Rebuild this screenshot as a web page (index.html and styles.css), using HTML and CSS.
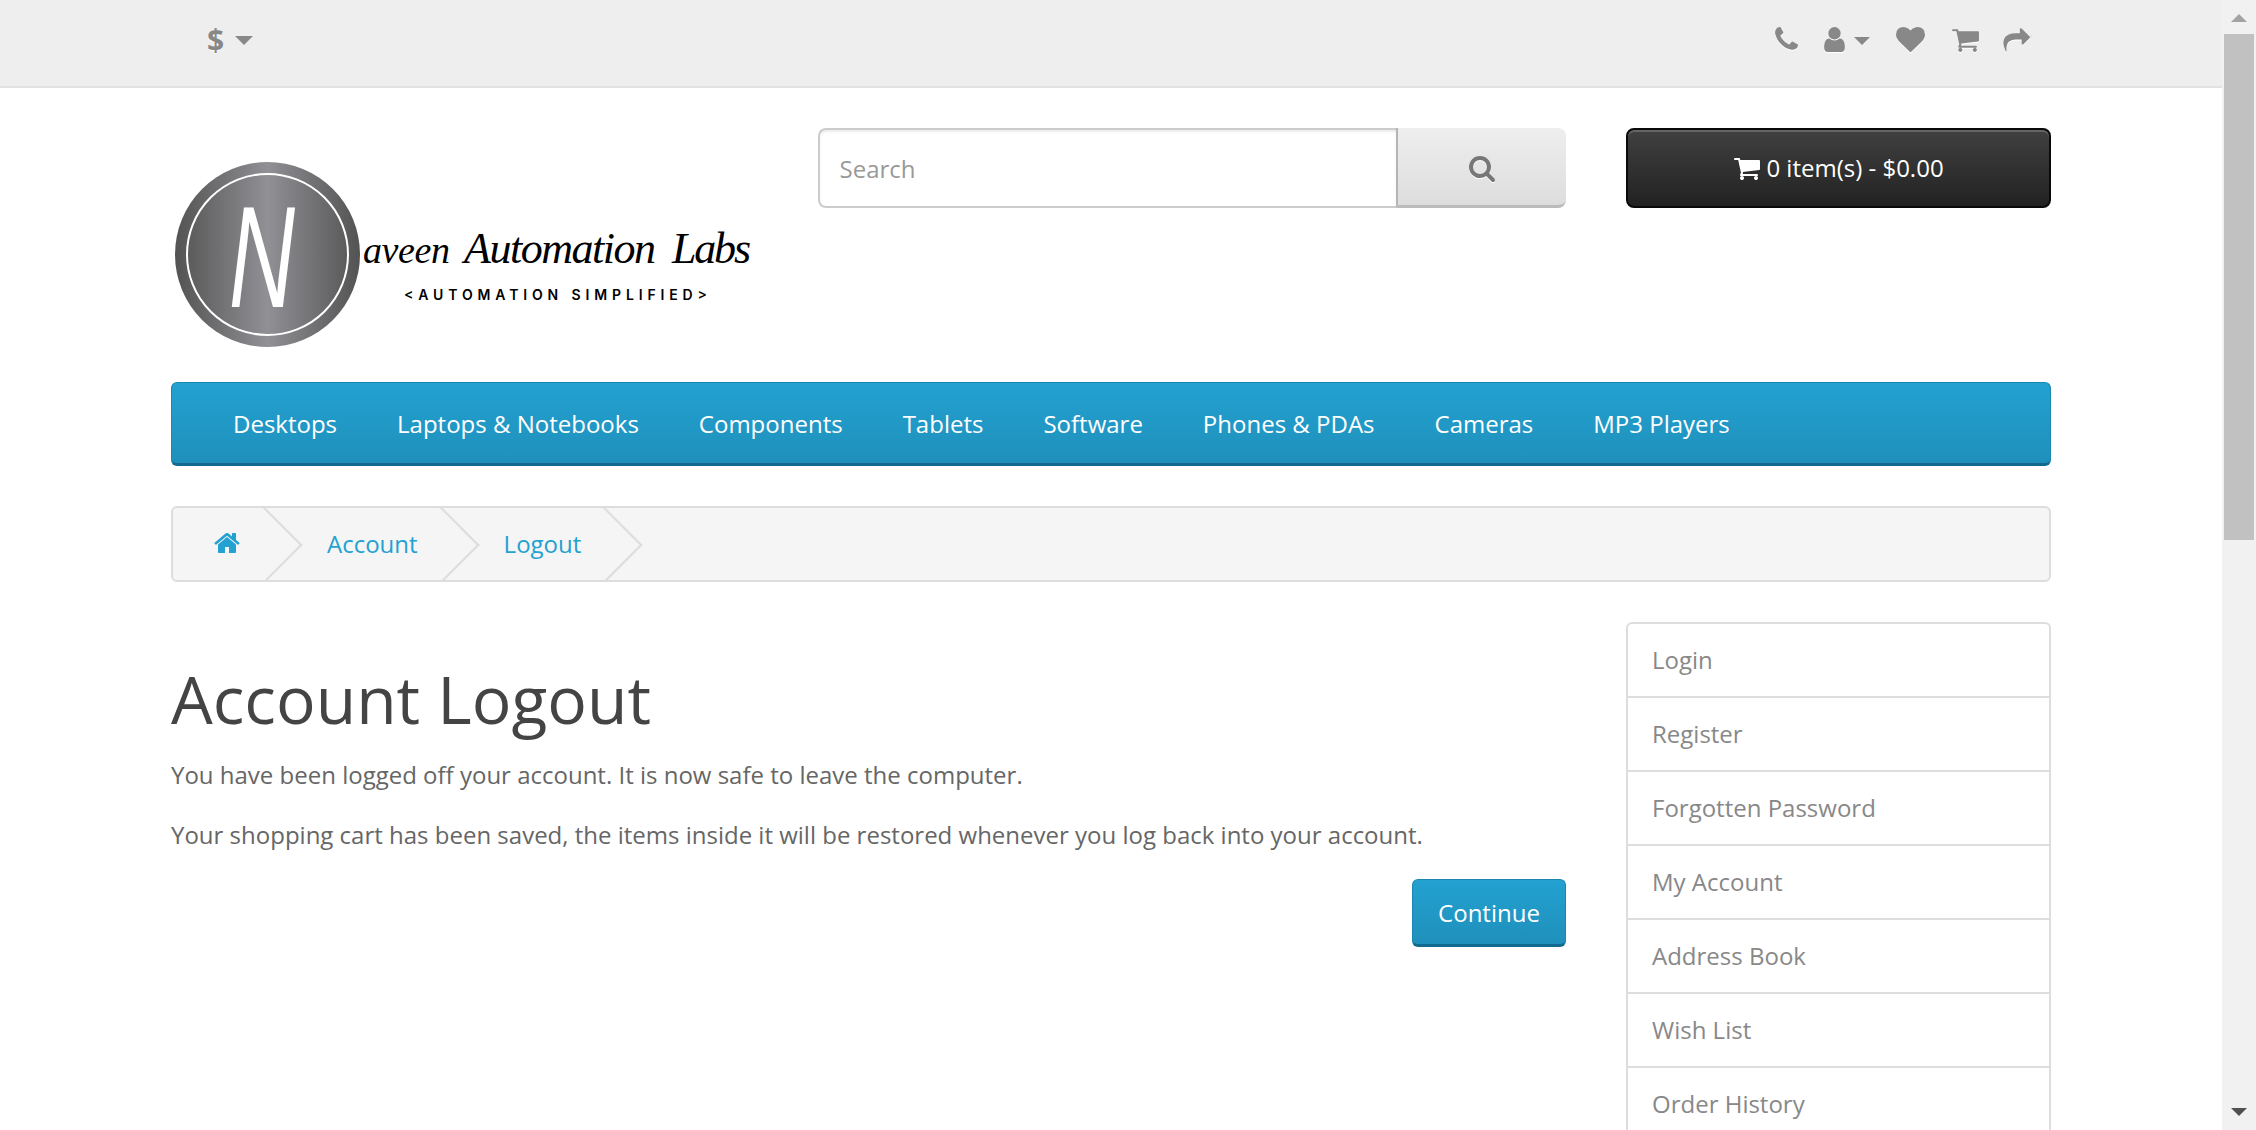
FILE: index.html
```html
<!DOCTYPE html>
<html lang="en">
<head>
<meta charset="utf-8">
<title>Account Logout</title>
<link rel="stylesheet" href="styles.css">
</head>
<body>
<svg class="defs" aria-hidden="true">
  <symbol id="i-home" viewBox="0 0 1792 1792"><path d="M1472 992v480q0 26-19 45t-45 19h-384v-384h-256v384h-384q-26 0-45-19t-19-45v-480q0-1 .5-3t.5-3l575-474 575 474q1 2 1 6zm223-69l-62 74q-8 9-21 11h-3q-13 0-21-7l-692-577-692 577q-12 8-24 7-13-2-21-11l-62-74q-8-10-7-23.5t11-21.5l719-599q32-26 76-26t76 26l244 204v-195q0-14 9-23t23-9h192q14 0 23 9t9 23v408l219 182q10 8 11 21.5t-7 23.5z"/></symbol>
  <symbol id="i-search" viewBox="0 0 1792 1792"><path d="M1216 832q0-185-131.500-316.500t-316.500-131.500-316.500 131.500-131.500 316.500 131.500 316.500 316.500 131.500 316.500-131.500 131.500-316.500zm512 832q0 52-38 90t-90 38q-54 0-90-38l-343-342q-179 124-399 124-143 0-273.500-55.500t-225-150-150-225-55.500-273.500 55.500-273.500 150-225 225-150 273.500-55.500 273.500 55.500 225 150 150 225 55.500 273.500q0 220-124 399l343 343q37 37 37 90z"/></symbol>
  <symbol id="i-cart" viewBox="0 0 1792 1792"><path d="M704 1536q0 52-38 90t-90 38-90-38-38-90 38-90 90-38 90 38 38 90zm896 0q0 52-38 90t-90 38-90-38-38-90 38-90 90-38 90 38 38 90zm128-1088v512q0 24-16.500 42.500t-40.500 21.500l-1044 122q13 60 13 70 0 16-24 64h920q26 0 45 19t19 45-19 45-45 19h-1024q-26 0-45-19t-19-45q0-11 8-31.500t16-36 21.500-40 15.500-29.500l-177-823h-204q-26 0-45-19t-19-45 19-45 45-19h256q16 0 28.500 6.500t19.500 15.500 13 24.500 8 26 5.500 29.500 4.500 26h1201q26 0 45 19t19 45z"/></symbol>
  <symbol id="i-heart" viewBox="0 0 1792 1792"><path d="M896 1664q-26 0-44-18l-624-602q-10-8-27.500-26t-55.500-65.500-68-97.500-53.500-121-23.500-138q0-220 127-344t351-124q62 0 126.500 21.500t120 58 95.500 68.500 76 68q36-36 76-68t95.500-68.500 120-58 126.500-21.500q224 0 351 124t127 344q0 221-229 450l-623 600q-18 18-44 18z"/></symbol>
  <symbol id="i-user" viewBox="0 0 1792 1792"><path d="M1536 1399q0 109-62.500 187t-150.500 78h-854q-88 0-150.500-78t-62.500-187q0-85 8.500-160.500t31.500-152 58.500-131 94-89 134.500-34.500q131 128 313 128t313-128q76 0 134.500 34.500t94 89 58.500 131 31.500 152 8.500 160.500zm-256-887q0 159-112.500 271.500t-271.500 112.500-271.500-112.500-112.500-271.500 112.500-271.500 271.500-112.500 271.500 112.500 112.500 271.500z"/></symbol>
  <symbol id="i-phone" viewBox="0 0 1792 1792"><path d="M1600 1240q0 27-10 70.500t-21 68.500q-21 50-122 106-94 51-186 51-27 0-53-3.500t-57.500-12.500-47-14.500-55.500-20.500-49-18q-98-35-175-83-127-79-264-216t-216-264q-48-77-83-175-3-9-18-49t-20.500-55.500-14.500-47-12.500-57.500-3.500-53q0-92 51-186 56-101 106-122 25-11 68.500-21t70.500-10q14 0 21 3 18 6 53 76 11 19 30 54t35 63.500 31 53.500q3 4 17.500 25t21.500 35.500 7 28.500q0 20-28.500 50t-62 55-62 53-28.500 46q0 9 5 22.500t8.500 20.500 14 24 11.500 19q76 137 174 235t235 174q2 1 19 11.500t24 14 20.500 8.500 22.500 5q18 0 46-28.500t53-62 55-62 50-28.500q14 0 28.500 7t35.500 21.500 25 17.500q25 15 53.500 31t63.500 35 54 30q70 35 76 53 3 7 3 21z"/></symbol>
  <symbol id="i-share" viewBox="0 0 1792 1792"><path d="M1792 640q0 26-19 45l-512 512q-19 19-45 19t-45-19-19-45v-256h-224q-98 0-175.500 6t-154 21.500-133 42.500-105.500 69.500-79.500 101-49 138.500-18 190q0 44 4 97 0 5 2 19.500t2 21.500q0 13-7 21t-20 8q-14 0-25-15-7-9-12.500-22t-12.500-29.500-10-23.500q-111-250-111-393 0-171 45.500-286 139-346 748-346h224v-256q0-26 19-45t45-19 45 19l512 512q19 19 19 45z"/></symbol>
</svg>
<div class="window">
  <div class="page">
    <div class="topbar">
      <div class="container topbar-row">
        <div class="currency"><span class="dollar">$</span><span class="caret"></span></div>
        <div class="top-links">
          <svg class="ticon"><use href="#i-phone"/></svg>
          <span class="account"><svg class="ticon"><use href="#i-user"/></svg><span class="caret small"></span></span>
          <svg class="ticon heart"><use href="#i-heart"/></svg>
          <svg class="ticon tcart"><use href="#i-cart"/></svg>
          <svg class="ticon share"><use href="#i-share"/></svg>
        </div>
      </div>
    </div>
    <div class="container">
      <header class="site-header">
        <div class="logo">
          <svg class="logo-art" viewBox="0 0 586 190" width="586" height="190" role="img" aria-label="Naveen Automation Labs">
            <defs>
              <linearGradient id="metal" x1="0" x2="1" y1="0" y2="0">
                <stop offset="0" stop-color="#535353"/>
                <stop offset="0.5" stop-color="#909095"/>
                <stop offset="1" stop-color="#535353"/>
              </linearGradient>
            </defs>
            <circle cx="96.500" cy="94.500" r="92.500" fill="url(#metal)"/>
            <circle cx="96.500" cy="94.500" r="80.500" fill="none" stroke="#fff" stroke-width="2"/>
            <text class="logo-n" x="58" y="147" textLength="66" lengthAdjust="spacingAndGlyphs">N</text>
            <text class="logo-script small-word" x="192" y="103" textLength="87">aveen</text>
            <text class="logo-script" x="293" y="103" textLength="192">Automation</text>
            <text class="logo-script" x="501" y="103" textLength="79">Labs</text>
            <text class="logo-sub" x="233" y="140" textLength="303">&lt;AUTOMATION SIMPLIFIED&gt;</text>
          </svg>
        </div>
        <div class="search">
          <input class="search-input" type="text" placeholder="Search">
          <button class="search-btn" type="button"><svg class="search-icon"><use href="#i-search"/></svg></button>
        </div>
        <button class="cart-btn" type="button"><svg class="cart-icon"><use href="#i-cart"/></svg><span>0 item(s) - $0.00</span></button>
      </header>
      <nav class="menu">
        <a>Desktops</a><a>Laptops &amp; Notebooks</a><a>Components</a><a>Tablets</a><a>Software</a><a>Phones &amp; PDAs</a><a>Cameras</a><a>MP3 Players</a>
      </nav>
      <ul class="breadcrumb">
        <li><svg class="home-icon"><use href="#i-home"/></svg></li>
        <li>Account</li>
        <li>Logout</li>
      </ul>
      <div class="columns">
        <main class="content">
          <h1>Account Logout</h1>
          <p>You have been logged off your account. It is now safe to leave the computer.</p>
          <p>Your shopping cart has been saved, the items inside it will be restored whenever you log back into your account.</p>
          <div class="actions"><button class="continue" type="button">Continue</button></div>
        </main>
        <aside class="side-list">
          <a>Login</a><a>Register</a><a>Forgotten Password</a><a>My Account</a><a>Address Book</a><a>Wish List</a><a>Order History</a>
        </aside>
      </div>
    </div>
  </div>
  <div class="scrollbar">
    <span class="arrow up"></span>
    <span class="thumb"></span>
    <span class="arrow down"></span>
  </div>
</div>
</body>
</html>
```
FILE: styles.css
```css
* { box-sizing: border-box; }
html, body { margin: 0; padding: 0; height: 100%; overflow: hidden; }
body { font-family: "Open Sans", sans-serif; font-size: 24px; line-height: 36px; color: #666; background: #fff; }
.defs { width: 0; height: 0; position: absolute; }
.window { display: flex; height: 1130px; overflow: hidden; }
.page { flex: 1 1 auto; min-width: 0; overflow: hidden; }
.container { width: 1880px; margin: 0 auto; }

.scrollbar { flex: 0 0 34px; background: #f1f1f1; display: flex; flex-direction: column; align-items: center; padding: 14px 0 14px; }
.thumb { width: 30px; height: 506px; background: #c1c1c1; margin-top: 12px; }
.arrow { width: 0; height: 0; border-left: 8px solid transparent; border-right: 8px solid transparent; }
.arrow.up { border-bottom: 8px solid #a3a3a3; }
.arrow.down { border-top: 8px solid #505050; margin-top: auto; }

.topbar { height: 88px; background: #eee; border-bottom: 2px solid #e2e2e2; }
.topbar-row { display: flex; justify-content: space-between; height: 86px; }
.currency { display: flex; align-items: center; gap: 11px; margin-left: 36px; height: 80px; color: #888; }
.dollar { font-size: 30px; font-weight: 700; line-height: 1; text-shadow: 0 1px 0 #fff; }
.caret { width: 0; height: 0; border-left: 9px solid transparent; border-right: 9px solid transparent; border-top: 9px solid #888; }
.caret.small { border-left-width: 8px; border-right-width: 8px; border-top-width: 8px; margin-left: 5px; margin-top: 4px; }
.top-links { display: flex; align-items: center; height: 78px; margin-right: 19px; }
.account { display: flex; align-items: center; margin-left: 19px; }
.ticon { width: 29px; height: 29px; fill: #888; display: block; filter: drop-shadow(0 1px 0 #fff); }
.heart { margin-left: 26px; }
.tcart { margin-left: 26px; }
.share { margin-left: 23px; }

.site-header { display: grid; grid-template-columns: 586px 748px 1fr; column-gap: 60.500px; height: 294px; padding-top: 40px; align-items: start; }
.logo { padding-top: 32px; }
.logo-art { display: block; }
.logo-n { font-family: "Liberation Sans", sans-serif; font-style: italic; font-size: 145px; fill: #fff; }
.logo-script { font-family: "Liberation Serif", serif; font-style: italic; font-size: 44px; fill: #000; }
.small-word { font-size: 38px; }
.logo-sub { font-family: Inter, sans-serif; font-weight: 600; font-size: 14px; fill: #000; }

.search { display: flex; height: 80px; }
.search-input { flex: 1 1 auto; min-width: 0; height: 80px; font: inherit; color: #666; padding: 0 20px; border: 2px solid #ccc; border-right: 0; border-radius: 8px 0 0 8px; box-shadow: inset 0 2px 2px rgba(0,0,0,.08); outline: 0; background: #fff; }
.search-input::placeholder { color: #999; opacity: 1; }
.search-btn { flex: 0 0 170px; height: 80px; padding: 3px 0 0; display: flex; align-items: center; justify-content: center; border: 0; border-left: 2px solid #b5b5b5; border-bottom: 3px solid #bbb; border-radius: 0 8px 8px 0; background: linear-gradient(#eee, #ddd); }
.search-icon { width: 28px; height: 28px; fill: #777; filter: drop-shadow(0 1px 0 #fff); }

.cart-btn { height: 80px; padding: 0; display: flex; align-items: center; justify-content: center; gap: 5px; font: inherit; color: #fff; border: 2px solid #0a0a0a; border-radius: 8px; background: linear-gradient(#404040, #222); box-shadow: inset 0 2px 0 rgba(255,255,255,.2); }
.cart-icon { width: 28px; height: 28px; fill: #fff; }

.menu { display: flex; height: 84px; align-items: center; padding-left: 31px; padding-top: 2px; background: linear-gradient(#23a1d1, #1f90bb); border: 1px solid #1b87b0; border-bottom: 3px solid #126a8e; border-radius: 6px; }
.menu a { padding: 0 30px; color: #fff; white-space: nowrap; }

.breadcrumb { display: flex; list-style: none; height: 76px; margin: 40px 0 0; padding: 0 0 0 40px; align-items: center; overflow: hidden; background: #f5f5f5; border: 2px solid #ddd; border-radius: 6px; color: #23a1d1; }
.breadcrumb li { position: relative; height: 72px; line-height: 72px; padding: 0 61px 0 25px; white-space: nowrap; }
.breadcrumb li:first-child { padding-left: 0; }
.breadcrumb li::after { content: ""; position: absolute; top: 9px; right: 11px; width: 54px; height: 54px; border-top: 2px solid #ddd; border-right: 2px solid #ddd; transform: rotate(45deg); }
.home-icon { width: 28px; height: 28px; fill: #23a1d1; display: block; margin-top: 21px; }

.columns { display: grid; grid-template-columns: 1395px 1fr; column-gap: 60px; margin-top: 40px; }
.content h1 { font-size: 66px; font-weight: 400; line-height: 72px; color: #444; margin: 40px 0 0; }
.content p { margin: 0; padding-top: 24px; }
.content h1 + p { padding-top: 23px; }
.actions { display: flex; justify-content: flex-end; margin-top: 26px; }
.continue { width: 154px; height: 68px; font: inherit; color: #fff; border: 1px solid #1b87b0; border-bottom: 3px solid #126a8e; border-radius: 6px; background: linear-gradient(#23a1d1, #1f90bb); padding: 1px 0 0; }

.side-list { border: 2px solid #ddd; border-radius: 6px 6px 0 0; border-bottom: 0; }
.side-list a { display: block; height: 74px; line-height: 72px; padding-left: 24px; color: #888; border-bottom: 2px solid #ddd; }
```
